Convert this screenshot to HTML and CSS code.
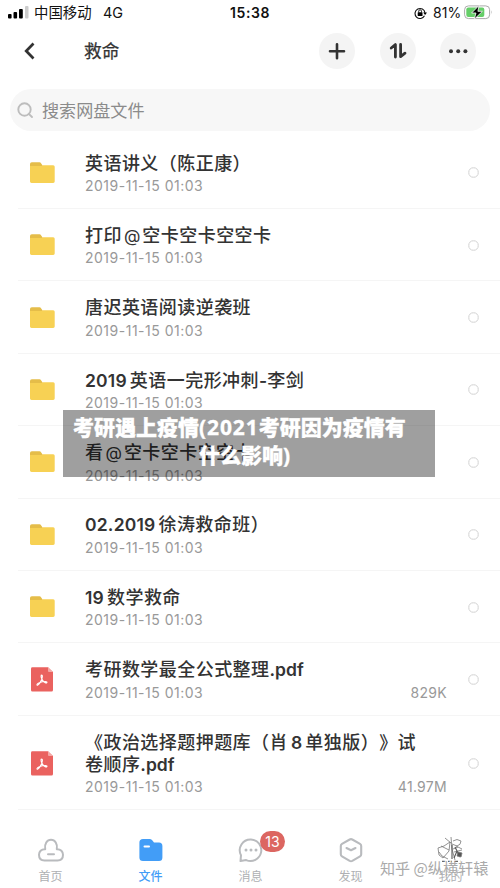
FILE: index.html
```html
<!DOCTYPE html>
<html lang="zh-CN">
<head>
<meta charset="utf-8">
<title>救命</title>
<link rel="stylesheet" href="styles.css">
</head>
<body>
<svg class="defs" width="0" height="0" aria-hidden="true">
  <symbol id="folder" viewBox="0 0 25 22"><path d="M0 2Q0 .3 1.8 .3H9.5Q10.5 .3 11.2 1.4L12.6 3.5V8H0Z" fill="#e5bd49"/><path d="M0 4H11.5L13 3.2H23.2Q24.7 3.2 24.7 4.8V19.6Q24.7 21 23.2 21H1.5Q0 21 0 19.6Z" fill="#f7d154"/></symbol>
  <symbol id="pdf" viewBox="0 0 22 25"><path d="M1.4 .3H17L22 5V23Q22 24.5 20.6 24.5H1.4Q0 24.5 0 23V1.7Q0 .3 1.4 .3Z" fill="#ea625f"/><path d="M17 .3L22 5H18Q17 5 17 4Z" fill="#f4aaa7"/><path d="M10.2 8.2C12 7.5 11.6 11 9.8 14.2C8.5 16.8 6.6 18.9 6 17.9C5.5 16.7 9.8 14.5 14.5 14.5C17 14.6 15.9 16.4 14.2 15.7C11.7 14.7 9.4 10.2 10.2 8.2Z" fill="none" stroke="#fff" stroke-width="1.1"/></symbol>
</svg>
<div class="screen">
  <div class="status">
    <svg class="signal" width="21" height="13" viewBox="0 0 21 13"><rect y="8" width="3.6" height="4.5" rx="1"/><rect x="5.5" y="6" width="3.6" height="6.5" rx="1"/><rect x="11" y="3" width="3.8" height="9.5" rx="1"/><rect x="17" width="3.5" height="12.5" rx="1" fill="#ccc"/></svg>
    <span class="carrier">中国移动</span><span class="net">4G</span>
    <span class="clock">15:38</span>
    <svg class="lock" width="13" height="12" viewBox="0 0 13 12"><path d="M10.5 8.8A5 5 0 1 1 11 5.8" fill="none" stroke="#111" stroke-width="1.1"/><path d="M9.2 5.4H13L11.1 8Z"/><rect x="3.7" y="5.2" width="4.8" height="3.7" rx=".5"/><path d="M4.7 5.5V4.2a1.4 1.4 0 0 1 2.8 0V5.5" fill="none" stroke="#111" stroke-width=".9"/></svg>
    <span class="percent">81%</span>
    <svg class="battery" width="29" height="15" viewBox="0 0 29 15"><rect x=".6" y=".9" width="25" height="12.7" rx="3.8" fill="#fff" stroke="#aaa"/><rect x="2.3" y="2.6" width="18" height="9.3" rx="2" fill="#65ce68"/><path d="M27.3 5.2q1.4 2 0 4z" fill="#aaa"/><path d="M15 .5L7.6 8H12L10.2 14.3L18.4 6.3H13.9Z" stroke="#fff" stroke-width=".8"/></svg>
  </div>
  <header class="bar">
    <svg class="back" width="12" height="18" viewBox="0 0 12 18"><path d="M9.5 1.5L2.2 9L9.5 16.5" fill="none" stroke="#333" stroke-width="2.7"/></svg>
    <h1>救命</h1>
    <div class="actions">
      <span class="round"><svg width="36" height="36" viewBox="0 0 36 36"><path d="M18 11.2V25.2M11 18.2H25" stroke="#333" stroke-width="2.6" stroke-linecap="round"/></svg></span>
      <span class="round"><svg width="36" height="36" viewBox="0 0 36 36"><path d="M11.2 15L15.4 11.6V24M20.6 11.4V23.7L25 20.2" fill="none" stroke="#333" stroke-width="2.8" stroke-linecap="round" stroke-linejoin="round"/></svg></span>
      <span class="round"><svg width="36" height="36" viewBox="0 0 36 36" fill="#333"><circle cx="11" cy="18.2" r="2"/><circle cx="18.2" cy="18.2" r="2"/><circle cx="25.4" cy="18.2" r="2"/></svg></span>
    </div>
  </header>
  <div class="search">
    <svg width="17" height="17" viewBox="0 0 17 17"><circle cx="7.5" cy="7.5" r="6.2" fill="none" stroke="#bdbdbd" stroke-width="1.9"/><path d="M11.8 11.8L15 15" stroke="#bdbdbd" stroke-width="1.9" stroke-linecap="round"/></svg>
    <span>搜索网盘文件</span>
  </div>
  <main class="list">
    <div class="row"><svg class="folder"><use href="#folder"/></svg><div class="info"><div class="name">英语讲义（陈正康）</div><div class="meta"><span>2019-11-15 01:03</span></div></div><i class="check"></i></div>
    <div class="row"><svg class="folder"><use href="#folder"/></svg><div class="info"><div class="name">打印<b class="at">@</b>空卡空卡空空卡</div><div class="meta"><span>2019-11-15 01:03</span></div></div><i class="check"></i></div>
    <div class="row"><svg class="folder"><use href="#folder"/></svg><div class="info"><div class="name">唐迟英语阅读逆袭班</div><div class="meta"><span>2019-11-15 01:03</span></div></div><i class="check"></i></div>
    <div class="row"><svg class="folder"><use href="#folder"/></svg><div class="info"><div class="name"><b class="lead">2019</b>英语一完形冲刺<b>-</b>李剑</div><div class="meta"><span>2019-11-15 01:03</span></div></div><i class="check"></i></div>
    <div class="row"><svg class="folder"><use href="#folder"/></svg><div class="info"><div class="name">看<b class="at">@</b>空卡空卡空空卡</div><div class="meta"><span>2019-11-15 01:03</span></div></div><i class="check"></i></div>
    <div class="row"><svg class="folder"><use href="#folder"/></svg><div class="info"><div class="name"><b class="lead">02.2019</b>徐涛救命班）</div><div class="meta"><span>2019-11-15 01:03</span></div></div><i class="check"></i></div>
    <div class="row"><svg class="folder"><use href="#folder"/></svg><div class="info"><div class="name"><b class="lead">19</b>数学救命</div><div class="meta"><span>2019-11-15 01:03</span></div></div><i class="check"></i></div>
    <div class="row"><svg class="pdf"><use href="#pdf"/></svg><div class="info"><div class="name">考研数学最全公式整理<b class="ext">.pdf</b></div><div class="meta"><span>2019-11-15 01:03</span><span class="size">829K</span></div></div><i class="check"></i></div>
    <div class="row tall"><svg class="pdf"><use href="#pdf"/></svg><div class="info"><div class="name">《政治选择题押题库（肖<b class="num">8</b>单独版）》试<br>卷顺序<b class="ext">.pdf</b></div><div class="meta"><span>2019-11-15 01:03</span><span class="size">41.97M</span></div></div><i class="check"></i></div>
  </main>
  <nav class="tabs">
    <div class="tab"><svg width="28" height="26" viewBox="0 0 28 26" fill="none" stroke="#b9bbbe" stroke-width="2"><path d="M8.2 12.2C7.2 6.8 10 2.8 14 2.8S20.8 6.8 19.8 12.2C23.8 12 26 14.8 26 17.8C26 21 24.2 23.5 20.5 23.5H7.5C3.8 23.5 2 21 2 17.8C2 14.8 4.2 12 8.2 12.2Z" stroke-linejoin="round"/><path d="M11 17.3H17" stroke-linecap="round"/></svg><span>首页</span></div>
    <div class="tab active"><svg width="28" height="26" viewBox="0 0 28 26"><path d="M6 2H12.6Q14 2 15 3.1L17 5.5H22Q25.4 5.5 25.4 9V20.5Q25.4 24 22 24H6Q2.4 24 2.4 20.5V5.5Q2.4 2 6 2Z" fill="#429df7"/><path d="M7.5 9.6H12" stroke="#fff" stroke-width="2" stroke-linecap="round"/></svg><span>文件</span></div>
    <div class="tab"><svg width="28" height="26" viewBox="0 0 28 26"><path d="M14 2.4A10.8 10.8 0 1 1 9.2 23.1L3.5 24.1L4 18.2A10.8 10.8 0 0 1 14 2.4Z" fill="none" stroke="#b9bbbe" stroke-width="2" stroke-linejoin="round"/><g fill="#b9bbbe"><circle cx="9" cy="13" r="1.5"/><circle cx="14" cy="13" r="1.5"/><circle cx="19" cy="13" r="1.5"/></g></svg><em>13</em><span>消息</span></div>
    <div class="tab"><svg width="28" height="26" viewBox="0 0 28 26" fill="none" stroke="#b9bbbe" stroke-width="2.1" stroke-linejoin="round" stroke-linecap="round"><path d="M12.7 2.5Q14 1.8 15.3 2.5L23 6.8Q24.2 7.5 24.2 9V17.2Q24.2 18.7 23 19.4L15.3 23.9Q14 24.6 12.7 23.9L5 19.4Q3.8 18.7 3.8 17.2V9Q3.8 7.5 5 6.8Z"/><path d="M9.5 11L14 13.3L18.5 11"/></svg><span>发现</span></div>
    <div class="tab"><svg width="28" height="26" viewBox="0 0 28 26" fill="none" stroke="#777" stroke-width=".8"><path d="M8 1L14 6M1 11L7 9L13 5L12 14L6 21L2 18L1 11M4 9L12 13M2 15L5 19L11 22M14 0L15 12L18 23M16 4Q20 1 24 4Q24 8 20 9L15 7M19 9L25 12M16 12L21 10M17 15L25 13"/><path d="M15 8V22M18 10L23 20M20 14l-3 7" stroke="#555" stroke-width="1.1"/><path d="M5 24.3H24" stroke="#444" stroke-width="1" stroke-dasharray="4 2"/><path d="M21 15l4 1-1 4-4-1z" fill="#555"/></svg><span>我的</span></div>
  </nav>
  <div class="caption"><div class="line first">考研遇上疫情<b>(2021</b>考研因为疫情有</div><div class="line second">什么影响<b>)</b></div></div>
  <div class="watermark">知乎 @纵横轩辕</div>
</div>
</body>
</html>
```
FILE: styles.css
```css
* { box-sizing: border-box; }
body { margin: 0; background: #fff; font-family: Inter, "Noto Sans CJK SC", sans-serif; color: #333; }
svg { display: block; flex: none; }
.defs { position: absolute; }
.screen { position: relative; width: 500px; height: 888px; overflow: hidden; display: flex; flex-direction: column; }
.status { display: flex; align-items: center; height: 25px; padding: 0 6px 0 8px; color: #111; white-space: nowrap; }
.signal { margin-right: 5px; }
.carrier { width: 69px; font-size: 14.4px; line-height: 25px; }
.net { width: 127px; font-size: 14.4px; }
.clock { width: 184px; font-size: 14px; font-weight: 600; letter-spacing: .6px; }
.lock { margin-right: 6px; }
.percent { width: 31px; font-size: 14px; letter-spacing: .1px; }
.battery { margin-top: -1px; }
.bar { display: flex; align-items: center; height: 52px; padding: 0 24px; }
.bar h1 { margin: 1px 0 0 48px; font-size: 17.7px; line-height: 26px; font-weight: 400; -webkit-text-stroke: .25px #333; }
.actions { display: flex; gap: 24.3px; margin-left: auto; }
.round { width: 36px; height: 36px; border-radius: 50%; background: #f4f4f4; }
.search { display: flex; align-items: center; gap: 8px; height: 42px; margin: 12px 10px 0; padding: 1px 0 0 7px; border-radius: 21px; background: #f7f7f7; color: #8b8b8b; font-size: 17.1px; line-height: 26px; }
.list { display: flex; flex-direction: column; margin: 5.6px 0 0 18px; }
.row { display: flex; align-items: center; height: 72.4px; padding: 1px 21px 0 12px; border-bottom: 1px solid #f5f5f5; }
.tall { height: 94px; padding-top: 2px; }
.folder { width: 25px; height: 22px; }
.pdf { width: 22px; height: 25px; margin: 0 2px 0 1px; }
.info { width: 362px; margin-left: 30px; padding-top: 2px; }
.name { font-size: 18px; line-height: 22px; letter-spacing: .45px; font-weight: 500; white-space: nowrap; text-spacing-trim: space-all; }
.name b { font-size: 17.5px; font-weight: 600; letter-spacing: .2px; }
.name .lead { margin-right: 3px; }
.name .at { margin: 0 2px; font-size: 17px; font-weight: 400; letter-spacing: 0; }
.name .num { margin: 0 3px; }
.name .ext { letter-spacing: 0; }
.meta { display: flex; justify-content: space-between; margin-top: 2.5px; font-size: 14px; line-height: 18px; letter-spacing: .5px; color: #999; }
.size { letter-spacing: .3px; }
.check { width: 11px; height: 11px; margin-left: 21px; border: 1.5px solid #ddd; border-radius: 50%; box-shadow: inset 0 0 0 .5px #e6e6e6; }
.tabs { display: grid; grid-template-columns: repeat(5, 100px); margin-top: 27.2px; }
.tab { position: relative; display: flex; flex-direction: column; align-items: center; gap: 5.5px; padding-left: 1px; font-size: 12px; line-height: 18px; color: #aeb0b3; }
.active { color: #429df7; font-weight: 500; }
.tab em { position: absolute; left: 60px; top: -6px; width: 25px; height: 21px; border-radius: 11px; background: #dc6661; color: #fff; font-size: 14px; font-style: normal; font-weight: 400; line-height: 21px; text-align: center; }
.caption { position: absolute; left: 63px; top: 410px; width: 372px; height: 67px; padding-top: 1.5px; background: rgba(0, 0, 0, .375); color: #fff; font: 900 21px/28px "Noto Sans CJK SC", sans-serif; -webkit-text-stroke: .3px #fff; white-space: nowrap; }
.caption b { font-family: "Noto Sans", "Noto Sans CJK SC", sans-serif; font-weight: 700; letter-spacing: .9px; }
.first { height: 28px; margin-left: 10px; }
.second { margin-left: 136px; }
.watermark { position: absolute; left: 380px; top: 855px; color: #aaa; font: 15.1px/24px "Noto Sans CJK SC", sans-serif; white-space: nowrap; text-shadow: -1px -1px #fff; }
```
